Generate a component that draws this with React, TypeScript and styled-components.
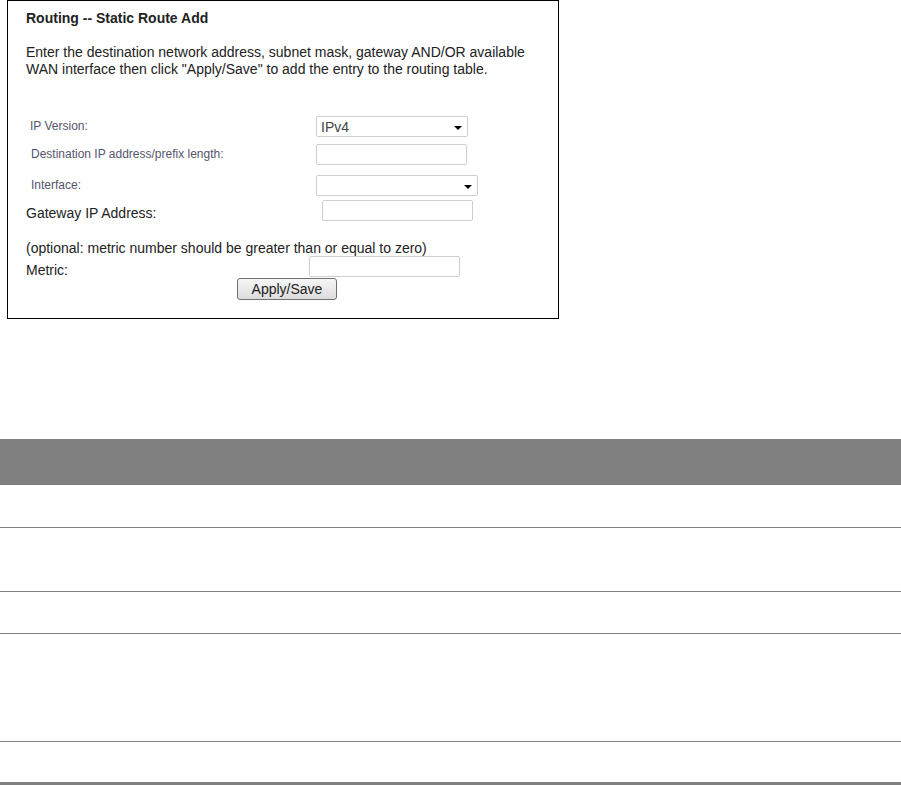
import React from "react";
import styled, { createGlobalStyle } from "styled-components";

const GlobalStyle = createGlobalStyle`
  body {
    margin: 0;
    background: #fff;
    font-family: "Liberation Sans", Arial, sans-serif;
    color: #000;
  }
`;

type FieldRow = {
  label: string;
  small?: boolean;
  kind: "select" | "input";
  value?: string;
  gap: number;
  labelIndent: number;
  labelShift: number;
  controlLeft: number;
  width: number;
};

const rows: FieldRow[] = [
  { label: "IP Version:", small: true, kind: "select", value: "IPv4", gap: 0, labelIndent: 4, labelShift: -1, controlLeft: 290, width: 152 },
  { label: "Destination IP address/prefix length:", small: true, kind: "input", gap: 7, labelIndent: 5, labelShift: -1, controlLeft: 290, width: 151 },
  { label: "Interface:", small: true, kind: "select", gap: 10, labelIndent: 5, labelShift: -1, controlLeft: 290, width: 162 },
  { label: "Gateway IP Address:", kind: "input", gap: 4, labelIndent: 0, labelShift: 2, controlLeft: 296, width: 151 },
];

const rowBodies = [43, 64, 42, 108, 46];

const App = () => {
  return (
    <>
      <GlobalStyle />
      <Panel>
        <Title>Routing -- Static Route Add</Title>
        <Description>
          Enter the destination network address, subnet mask, gateway AND/OR available
          <br />
          WAN interface then click "Apply/Save" to add the entry to the routing table.
        </Description>

        <Fields>
          {rows.map((r) => (
            <Row key={r.label} $gap={r.gap}>
              <Label
                $small={r.small}
                $indent={r.labelIndent}
                $shift={r.labelShift}
                $w={r.controlLeft}
              >
                {r.label}
              </Label>
              {r.kind === "select" ? (
                <FakeSelect $w={r.width}>
                  <span>{r.value ?? ""}</span>
                  <Caret />
                </FakeSelect>
              ) : (
                <TextBox $w={r.width} />
              )}
            </Row>
          ))}
        </Fields>

        <Note>(optional: metric number should be greater than or equal to zero)</Note>
        <Row $gap={-1}>
          <Label $indent={0} $shift={3} $w={283}>
            Metric:
          </Label>
          <TextBox $w={151} />
        </Row>
        <ButtonRow>
          <ApplyButton type="button">Apply/Save</ApplyButton>
        </ButtonRow>
      </Panel>

      <Table>
        <HeadRow />
        {rowBodies.map((h, i) => (
          <BodyRow key={i} $h={h} $last={i === rowBodies.length - 1} />
        ))}
      </Table>
    </>
  );
};

export default App;

const Panel = styled.div`
  box-sizing: border-box;
  margin-left: 7px;
  width: 552px;
  height: 319px;
  border: 1px solid #000;
  padding: 9px 0 0 18px;
`;

const Title = styled.div`
  font-size: 14px;
  font-weight: bold;
  line-height: 16px;
  color: #222;
`;

const Description = styled.div`
  margin-top: 18px;
  font-size: 14px;
  line-height: 17px;
  color: #222;
`;

const Fields = styled.div`
  margin-top: 38px;
  display: flex;
  flex-direction: column;
`;

const Row = styled.div<{ $gap: number }>`
  display: flex;
  align-items: center;
  height: 21px;
  margin-top: ${({ $gap }) => $gap}px;
`;

const Label = styled.div<{ $small?: boolean; $indent: number; $shift: number; $w: number }>`
  box-sizing: border-box;
  width: ${({ $w }) => $w}px;
  padding-left: ${({ $indent }) => $indent}px;
  position: relative;
  top: ${({ $shift }) => $shift}px;
  font-size: ${({ $small }) => ($small ? "12px" : "14px")};
  color: ${({ $small }) => ($small ? "#55556a" : "#222")};
  flex-shrink: 0;
`;

const TextBox = styled.input.attrs({ type: "text" })<{ $w: number }>`
  box-sizing: border-box;
  width: ${({ $w }) => $w}px;
  height: 21px;
  border: 1px solid #cfcfcf;
  border-radius: 2px;
  padding: 0 4px;
  font-family: inherit;
  font-size: 13px;
  outline: none;
`;

const FakeSelect = styled.div<{ $w: number }>`
  box-sizing: border-box;
  width: ${({ $w }) => $w}px;
  height: 21px;
  border: 1px solid #cfcfcf;
  border-radius: 2px;
  display: flex;
  align-items: center;
  justify-content: space-between;
  padding: 0 5px 0 4px;
  font-size: 14px;
  color: #444;
`;

const Caret = styled.span`
  width: 0;
  height: 0;
  border-left: 4px solid transparent;
  border-right: 4px solid transparent;
  border-top: 4px solid #000;
  margin-top: 2px;
`;

const Note = styled.div`
  margin-top: 19px;
  font-size: 14px;
  line-height: 17px;
  color: #222;
`;

const ButtonRow = styled.div`
  padding-left: 211px;
  margin-top: 1px;
`;

const ApplyButton = styled.button`
  box-sizing: border-box;
  width: 100px;
  height: 22px;
  border: 1px solid #707070;
  border-radius: 3px;
  background: linear-gradient(#f6f6f6, #dcdcdc);
  font-family: inherit;
  font-size: 14px;
  color: #222;
  padding: 0;
`;

const Table = styled.div`
  margin-top: 120px;
  display: flex;
  flex-direction: column;
`;

const HeadRow = styled.div`
  height: 46px;
  background: #808080;
`;

const BodyRow = styled.div<{ $h: number; $last?: boolean }>`
  box-sizing: border-box;
  height: ${({ $h }) => $h}px;
  border-bottom: ${({ $last }) => ($last ? "6px" : "1px")} solid #808080;
`;
